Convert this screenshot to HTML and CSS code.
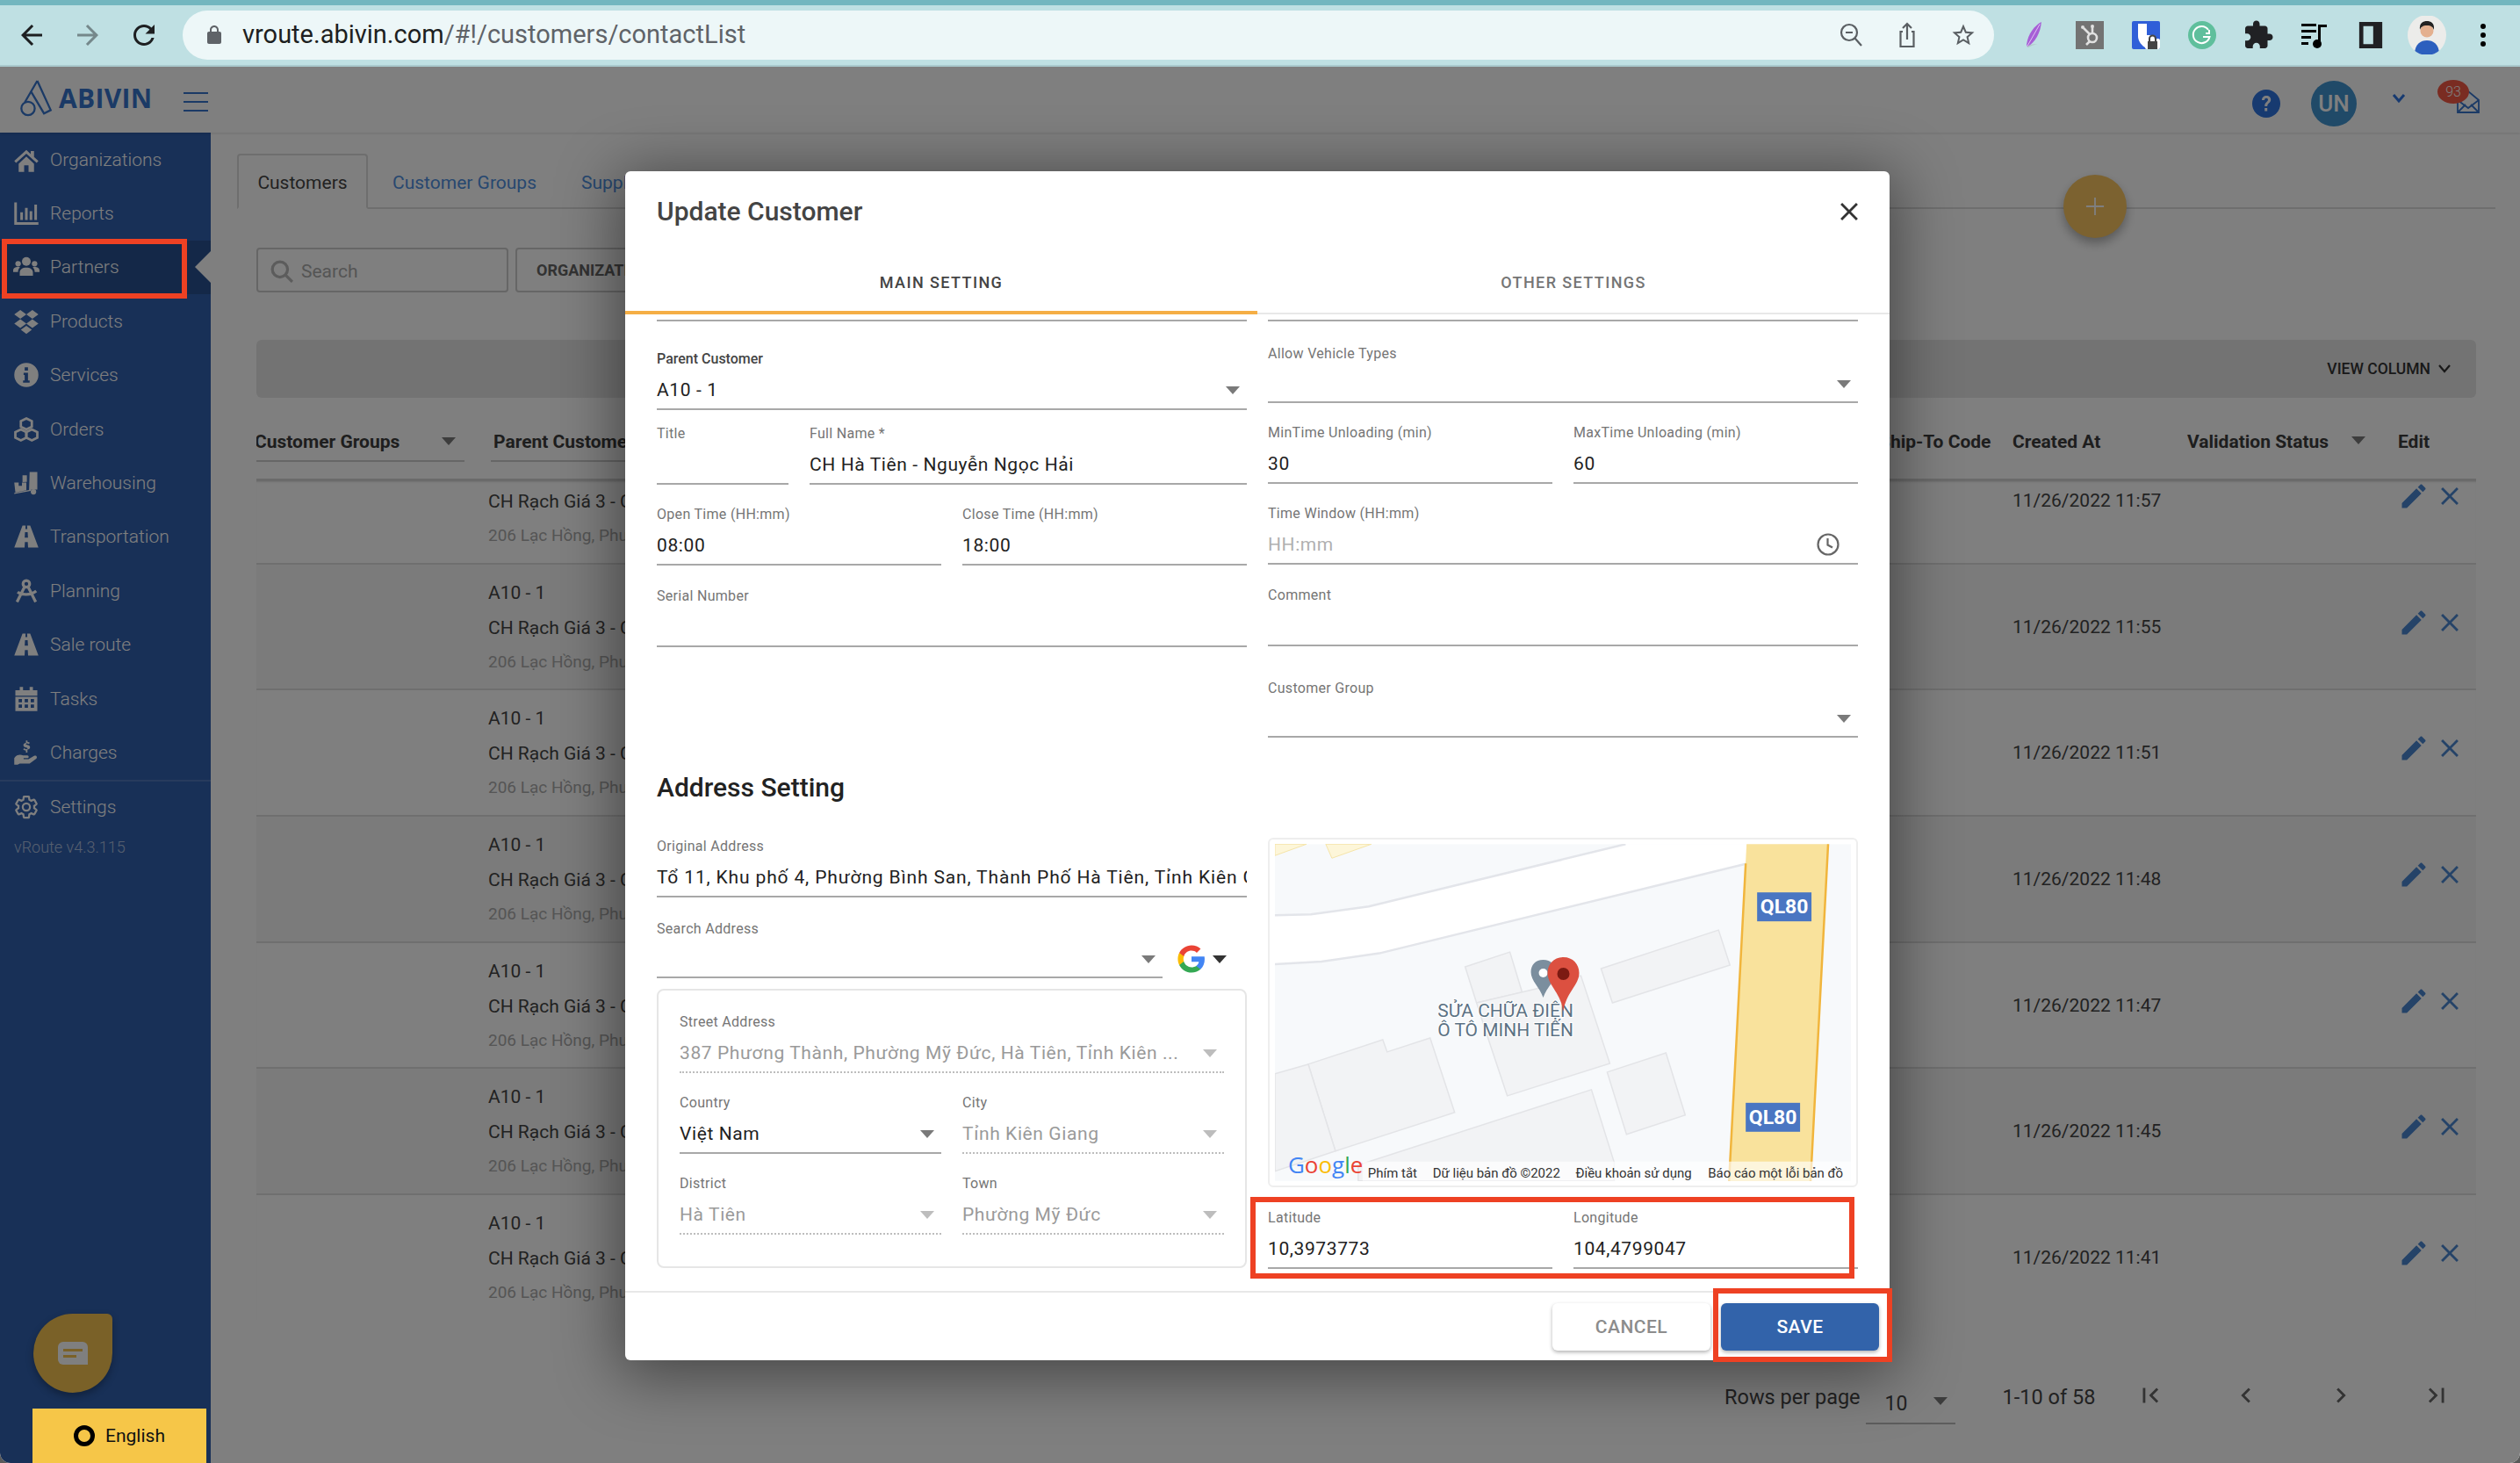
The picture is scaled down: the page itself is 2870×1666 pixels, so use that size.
FILE: index.html
```html
<!DOCTYPE html>
<html lang="en">
<head>
<meta charset="utf-8">
<title>Update Customer</title>
<link rel="stylesheet" href="styles.css">
</head>
<body>
<svg class="defs" aria-hidden="true">
  <symbol id="i-close" viewBox="0 0 24 24"><path d="M19 6.41L17.59 5 12 10.59 6.41 5 5 6.41 10.59 12 5 17.59 6.41 19 12 13.41 17.59 19 19 17.59 13.41 12z"/></symbol>
  <symbol id="i-pencil" viewBox="0 0 24 24"><path d="M3 17.25V21h3.75L17.81 9.94l-3.75-3.75L3 17.25zM20.71 7.04c.39-.39.39-1.02 0-1.41l-2.34-2.34c-.39-.39-1.02-.39-1.41 0l-1.83 1.83 3.75 3.75 1.83-1.83z"/></symbol>
  <symbol id="i-home" viewBox="0 0 24 24"><path d="M12 3 1 13l1.6 1.7L12 6.3l9.4 8.4L23 13l-4-3.6V4h-3v2.7zM5 15.5 12 9l7 6.5V23h-5v-6h-4v6H5z"/></symbol>
  <symbol id="i-reports" viewBox="0 0 24 24"><path d="M1 2h2.4v18H23v2.400H1zM6.500 11h2.400v7H6.500zM10.800 7h2.400v11h-2.400zM15 10h2.400v8H15zM19.300 4h2.400v14h-2.400z"/></symbol>
  <symbol id="i-group" viewBox="0 0 24 24"><circle cx="12" cy="7" r="4"/><circle cx="4.500" cy="9" r="2.500"/><circle cx="19.500" cy="9" r="2.500"/><path d="M6 20v-3c0-3 2.500-4.500 6-4.500s6 1.500 6 4.500v3zM0 15.500C0 13 2 12 4.500 12c.7 0 1.200.1 1.700.3C5 13.300 4.400 14.600 4.400 16.500H0zM24 15.500c0-2.500-2-3.500-4.500-3.500-.7 0-1.200.1-1.700.3 1.200 1 1.800 2.300 1.800 4.200H24z"/></symbol>
  <symbol id="i-products" viewBox="0 0 24 24"><path d="M6.500 1.500 1 5.500l5.500 4L12 5.500zM17.500 1.500 12 5.500l5.500 4 5.500-4zM6.500 10 1 14l5.500 4L12 14zM17.500 10 12 14l5.500 4 5.500-4zM12 16l-5 3.600 5 3.700 5-3.700z"/></symbol>
  <symbol id="i-info" viewBox="0 0 24 24"><path fill-rule="evenodd" d="M12 1a11 11 0 1 0 0 22 11 11 0 0 0 0-22zM10.500 5h3v3h-3zM9.500 10h4v7H15v2H9v-2h1.500v-5h-1z"/></symbol>
  <symbol id="i-orders" viewBox="0 0 24 24"><g fill="none" stroke="currentColor" stroke-width="2.200"><path d="M12 2l5 2.500v5L12 12 7 9.500v-5z"/><path d="M7 12l5 2.500v5L7 22l-5-2.500v-5z"/><path d="M17 12l5 2.500v5L17 22l-5-2.500v-5z"/></g></symbol>
  <symbol id="i-ware" viewBox="0 0 24 24"><path d="M1 11.500h4v3h3v-3h4v7L2 20.500zM8.500 5h4v6l-4 .1zM15 2h7v16h-5.500l-.5 1.200L1 22v-1l13.500-2.700z"/><circle cx="18.500" cy="20" r="2.500"/></symbol>
  <symbol id="i-road" viewBox="0 0 24 24"><path fill-rule="evenodd" d="M8.500 2h2.800l-.2 3.200h1.800L12.700 2h2.800L23 22h-9.400l-.3-5h-2.600l-.3 5H1zM10.800 8l-.3 5h3l-.3-5z"/></symbol>
  <symbol id="i-plan" viewBox="0 0 24 24"><g fill="none" stroke="currentColor" stroke-width="2.600"><circle cx="12" cy="5.500" r="3"/><path d="M10.500 8 3.500 22M13.500 8l7 14M4 13c4 3 12 3 17-1"/></g></symbol>
  <symbol id="i-cal" viewBox="0 0 24 24"><path fill-rule="evenodd" d="M6 1h3v3h6V1h3v3h4v5H2V4h4zM2 10h20v13H2zM5 12v3h3v-3zM10.500 12v3h3v-3zM16 12v3h3v-3zM5 17v3h3v-3zM10.500 17v3h3v-3zM16 17v3h3v-3z"/></symbol>
  <symbol id="i-hand" viewBox="0 0 24 24"><path d="M1 17c2-3 5-3.500 8-2.500h4c1.500 0 1.500 2.500 0 2.500H9.500v1H14l5-3c2-1 3.500 1 2 2.500L15 22H6l-2 1H1zM13 1v1.200c1 .1 1.800.5 2.200 1l-1 1c-.5-.4-1-.6-1.600-.6-.6 0-1 .2-1 .6 0 1 3.800.5 3.800 3 0 1.100-.9 1.900-2.400 2V12h-1.400v-1.800c-1.100-.1-2-.6-2.500-1.200l1-1c.5.500 1.200.9 1.900.9s1.100-.2 1.100-.7c0-1.100-3.800-.5-3.800-3 0-1 .8-1.800 2.300-2V1z"/></symbol>
  <symbol id="i-gear" viewBox="0 0 24 24"><g fill="none" stroke="currentColor" stroke-width="1.800"><path d="M19.140 12.940c.04-.3.06-.61.06-.94 0-.32-.02-.64-.07-.94l2.030-1.580c.18-.14.23-.41.12-.61l-1.920-3.320c-.12-.22-.37-.29-.59-.22l-2.390.96c-.5-.38-1.030-.7-1.620-.94l-.36-2.540c-.04-.24-.24-.41-.48-.41h-3.840c-.24 0-.43.17-.47.41l-.36 2.540c-.59.24-1.130.57-1.620.94l-2.390-.96c-.22-.08-.47 0-.59.22L2.740 8.870c-.12.21-.08.47.12.61l2.030 1.580c-.05.3-.09.63-.09.94s.02.64.07.94l-2.030 1.580c-.18.14-.23.41-.12.61l1.920 3.320c.12.22.37.29.59.22l2.390-.96c.5.38 1.030.7 1.620.94l.36 2.540c.05.24.24.41.48.41h3.840c.24 0 .44-.17.47-.41l.36-2.540c.59-.24 1.130-.56 1.620-.94l2.390.96c.22.08.47 0 .59-.22l1.920-3.320c.12-.22.07-.47-.12-.61l-2.010-1.580z"/><circle cx="12" cy="12" r="3.300"/></g></symbol>
</svg>

<div class="chrome">
  <div class="chrome-btn"><svg class="ic24" viewBox="0 0 24 24"><path d="M20 11H7.830l5.590-5.590L12 4l-8 8 8 8 1.410-1.410L7.830 13H20v-2z"/></svg></div>
  <div class="chrome-btn faded"><svg class="ic24" viewBox="0 0 24 24"><path d="M12 4l-1.410 1.410L16.170 11H4v2h12.170l-5.580 5.590L12 20l8-8z"/></svg></div>
  <div class="chrome-btn"><svg class="ic24" viewBox="0 0 24 24"><path d="M17.650 6.350C16.200 4.900 14.210 4 12 4c-4.420 0-7.990 3.580-7.990 8s3.570 8 7.990 8c3.730 0 6.840-2.550 7.730-6h-2.080c-.82 2.330-3.040 4-5.650 4-3.310 0-6-2.690-6-6s2.690-6 6-6c1.660 0 3.140.69 4.220 1.780L13 11h7V4l-2.350 2.350z"/></svg></div>
  <div class="omnibox">
    <svg class="lock" viewBox="0 0 24 24"><path fill-rule="evenodd" d="M18 8h-1V6c0-2.760-2.240-5-5-5S7 3.240 7 6v2H6c-1.100 0-2 .9-2 2v10c0 1.100.9 2 2 2h12c1.100 0 2-.9 2-2V10c0-1.100-.9-2-2-2zM9 6c0-1.660 1.340-3 3-3s3 1.340 3 3v2H9V6z"/></svg>
    <span class="url"><span class="url-host">vroute.abivin.com</span>/#!/customers/contactList</span>
    <div class="omni-actions">
      <div class="chrome-btn"><svg class="ic30" viewBox="0 0 30 30" fill="none" stroke="#5a5f63" stroke-width="2.200"><circle cx="13" cy="12" r="9"/><path d="M9 12h8M19.500 18.500 27 27"/></svg></div>
      <div class="chrome-btn"><svg class="ic30" viewBox="0 0 30 30" fill="none" stroke="#5a5f63" stroke-width="2.200"><path d="M10 11H7.500v17h15V11H20M15 20V2M10 7l5-5 5 5"/></svg></div>
      <div class="chrome-btn"><svg class="ic30" viewBox="0 0 24 24" fill="#5a5f63"><path d="M22 9.240l-7.190-.62L12 2 9.190 8.630 2 9.240l5.460 4.730L5.820 21 12 17.270 18.180 21l-1.630-7.030L22 9.240zM12 15.400l-3.760 2.270 1-4.280-3.320-2.880 4.380-.38L12 6.100l1.710 4.040 4.380.38-3.320 2.880 1 4.280L12 15.400z"/></svg></div>
    </div>
  </div>
  <div class="extensions">
    <div class="chrome-btn"><svg class="ic36" viewBox="0 0 36 36"><path d="M28 1C19 6 11 16 9 30l1 3C20 27 27 15 28 1z" fill="#a65fd6"/><path d="M26 4 10 32" stroke="#e6cdf5" stroke-width="1"/><path d="M10 33c4-4 9-4 13-3-5 0-9 2-12 4z" fill="#b4c8c8"/></svg></div>
    <div class="chrome-btn"><svg class="ic36" viewBox="0 0 32 32"><rect width="32" height="32" fill="#737373"/><g fill="none" stroke="#e0e0e0" stroke-width="2.600"><circle cx="19" cy="19" r="5"/><path d="M16 15 9 8M19 14V7M16 23l-4 4"/></g><circle cx="8" cy="7" r="2" fill="#e0e0e0"/><circle cx="19" cy="6" r="2" fill="#e0e0e0"/></svg></div>
    <div class="chrome-btn"><svg class="ic36" viewBox="0 0 32 32"><rect width="32" height="32" rx="2" fill="#2f5fd8"/><path d="M7 3h19v14c0 6-4 11-9.500 14C11 28 7 23 7 17z" fill="#fff"/><path d="M17 3h9v13h-9z" fill="#2f5fd8"/><rect x="15" y="20" width="17" height="12" rx="2" fill="#fff"/><rect x="18" y="23" width="11" height="9" fill="#444"/><path d="M20 23v-3a3.500 3.500 0 0 1 7 0v3" fill="none" stroke="#444" stroke-width="2"/></svg></div>
    <div class="chrome-btn"><svg class="ic36" viewBox="0 0 32 32"><circle cx="16" cy="16" r="16" fill="#5fbf9c"/><path d="M23 10a9.500 9.500 0 1 0 1.500 8H17" fill="none" stroke="#fff" stroke-width="2"/><path d="M24 10v4h-4" fill="none" stroke="#fff" stroke-width="2"/></svg></div>
    <div class="chrome-btn"><svg class="ic34" viewBox="0 0 24 24"><path d="M20.500 11H19V7c0-1.100-.9-2-2-2h-4V3.500C13 2.120 11.880 1 10.500 1S8 2.120 8 3.500V5H4c-1.100 0-1.990.9-1.990 2v3.800H3.500c1.490 0 2.700 1.210 2.700 2.700s-1.210 2.700-2.700 2.700H2V20c0 1.100.9 2 2 2h3.800v-1.500c0-1.490 1.210-2.700 2.700-2.700 1.490 0 2.700 1.210 2.700 2.700V22H17c1.100 0 2-.9 2-2v-4h1.500c1.380 0 2.500-1.120 2.500-2.500S21.880 11 20.500 11z"/></svg></div>
    <div class="chrome-btn"><svg class="ic36" viewBox="0 0 32 32"><path d="M1 3h17v3H1zM1 10h17v3H1zM1 17h11v3H1zM1 24h8v3H1z"/><path d="M20 4h10v3h-7v20h-3z"/><circle cx="19" cy="26" r="5"/></svg></div>
    <div class="chrome-btn"><svg class="ic30" viewBox="0 0 30 32"><path fill-rule="evenodd" d="M1 0h28v32H1zM6 5v22h12V5z" fill="#202124"/></svg></div>
    <div class="chrome-btn"><svg class="avatar" viewBox="0 0 44 44"><rect width="44" height="44" fill="#ececea"/><circle cx="22" cy="17" r="7.500" fill="#e4b08f"/><path d="M14 16c-1-8 4-10 8-10s9 2 8 10c-1-3-3-5-8-5s-7 2-8 5z" fill="#222"/><path d="M8 44c0-12 7-16 14-16s14 4 14 16z" fill="#2c5fbe"/></svg></div>
    <div class="chrome-btn"><svg class="ic30" viewBox="0 0 30 30"><circle cx="15" cy="5" r="3"/><circle cx="15" cy="15" r="3"/><circle cx="15" cy="25" r="3"/></svg></div>
  </div>
</div>

<div class="app">
  <header class="topbar">
    <div class="logo">
      <svg class="logo-mark" viewBox="0 0 40 44" fill="none" stroke="#3674cc" stroke-width="2.400"><path d="M21 1 6 27M21 1l16 35-8 4-16-27"/><circle cx="10" cy="34" r="8"/></svg>
      <span class="logo-text">ABIVIN</span>
    </div>
    <div class="burger"><span></span><span></span><span></span></div>
    <div class="top-right">
      <svg class="help" viewBox="0 0 32 32"><circle cx="16" cy="16" r="16" fill="#2f74e0"/><path d="M11 12c0-3 2.200-5 5.200-5s5 2 5 4.500c0 4-4 3.800-4 7.500h-3c0-5 3.800-4.800 3.800-7.500 0-1-.8-1.800-1.900-1.800s-2 .9-2.100 2.300zM14.200 21h3v3.500h-3z" fill="#fff"/></svg>
      <div class="user-chip">UN</div>
      <svg class="top-chev" viewBox="0 0 16 12" fill="none" stroke="#2f74e0" stroke-width="3"><path d="M2 2l6 7 6-7"/></svg>
      <div class="mail">
        <svg class="mail-ic" viewBox="0 0 26 26" fill="none" stroke="#3674cc" stroke-width="1.800"><path d="M1 11 13 1l12 10v14H1zM1 25l9-9M25 25l-9-9M1 11l12 9 12-9"/></svg>
        <span class="mail-badge">93</span>
      </div>
    </div>
  </header>

  <div class="workspace">
    <nav class="sidebar">
      <a class="nav-item"><svg class="nav-ic"><use href="#i-home"/></svg>Organizations</a>
      <a class="nav-item"><svg class="nav-ic"><use href="#i-reports"/></svg>Reports</a>
      <a class="nav-item active"><svg class="nav-ic"><use href="#i-group"/></svg>Partners</a>
      <a class="nav-item"><svg class="nav-ic"><use href="#i-products"/></svg>Products</a>
      <a class="nav-item"><svg class="nav-ic"><use href="#i-info"/></svg>Services</a>
      <a class="nav-item"><svg class="nav-ic"><use href="#i-orders"/></svg>Orders</a>
      <a class="nav-item"><svg class="nav-ic"><use href="#i-ware"/></svg>Warehousing</a>
      <a class="nav-item"><svg class="nav-ic"><use href="#i-road"/></svg>Transportation</a>
      <a class="nav-item"><svg class="nav-ic"><use href="#i-plan"/></svg>Planning</a>
      <a class="nav-item"><svg class="nav-ic"><use href="#i-road"/></svg>Sale route</a>
      <a class="nav-item"><svg class="nav-ic"><use href="#i-cal"/></svg>Tasks</a>
      <a class="nav-item"><svg class="nav-ic"><use href="#i-hand"/></svg>Charges</a>
      <a class="nav-item nav-settings"><svg class="nav-ic"><use href="#i-gear"/></svg>Settings</a>
      <div class="version">vRoute v4.3.115</div>
      <div class="chat-bubble"><svg class="chat-ic" viewBox="0 0 34 26"><path d="M6 0h22a6 6 0 0 1 6 6v20H6a6 6 0 0 1-6-6V6a6 6 0 0 1 6-6z" fill="#fff"/><path d="M6 8h22v3H6zM6 15h15v3H6z" fill="#f4c250"/></svg></div>
    </nav>

    <main class="content">
      <div class="tabs">
        <div class="tab current">Customers</div>
        <div class="tab">Customer Groups</div>
        <div class="tab">Suppliers</div>
      </div>
      <div class="panel">
        <div class="filters">
          <div class="search-box">
            <svg class="search-ic" viewBox="0 0 24 24" fill="none" stroke="#b8b8b8" stroke-width="3"><circle cx="10" cy="10" r="8"/><path d="M16 16l7 7"/></svg>
            <span>Search</span>
          </div>
          <div class="filter-box">ORGANIZATION</div>
        </div>
        <div class="toolbar">
          <span>VIEW COLUMN</span>
          <svg class="tool-chev" viewBox="0 0 16 12" fill="none" stroke="#333" stroke-width="2.200"><path d="M2 2l6 7 6-7"/></svg>
        </div>
        <div class="thead">
          <div class="th th-line th-clip"><span class="th-groups">Customer Groups</span><i class="caret"></i></div>
          <div class="th th-line">Parent Customer</div>
          <div class="th th-ship">Ship-To Code</div>
          <div class="th">Created At</div>
          <div class="th th-status"><span>Validation Status</span><i class="caret"></i></div>
          <div class="th">Edit</div>
        </div>
        <div class="tbody">
          <div class="tscroll">
            <div class="row"><div class="cell-parent"><div>A10 - 1</div><div>CH Rạch Giá 3 - C</div><div class="addr">206 Lạc Hồng, Phường</div></div><div class="cell-date">11/26/2022 11:57</div><div class="cell-edit"><svg class="ic-pencil"><use href="#i-pencil"/></svg><svg class="ic-x"><use href="#i-close"/></svg></div></div>
            <div class="row alt"><div class="cell-parent"><div>A10 - 1</div><div>CH Rạch Giá 3 - C</div><div class="addr">206 Lạc Hồng, Phường</div></div><div class="cell-date">11/26/2022 11:55</div><div class="cell-edit"><svg class="ic-pencil"><use href="#i-pencil"/></svg><svg class="ic-x"><use href="#i-close"/></svg></div></div>
            <div class="row"><div class="cell-parent"><div>A10 - 1</div><div>CH Rạch Giá 3 - C</div><div class="addr">206 Lạc Hồng, Phường</div></div><div class="cell-date">11/26/2022 11:51</div><div class="cell-edit"><svg class="ic-pencil"><use href="#i-pencil"/></svg><svg class="ic-x"><use href="#i-close"/></svg></div></div>
            <div class="row alt"><div class="cell-parent"><div>A10 - 1</div><div>CH Rạch Giá 3 - C</div><div class="addr">206 Lạc Hồng, Phường</div></div><div class="cell-date">11/26/2022 11:48</div><div class="cell-edit"><svg class="ic-pencil"><use href="#i-pencil"/></svg><svg class="ic-x"><use href="#i-close"/></svg></div></div>
            <div class="row"><div class="cell-parent"><div>A10 - 1</div><div>CH Rạch Giá 3 - C</div><div class="addr">206 Lạc Hồng, Phường</div></div><div class="cell-date">11/26/2022 11:47</div><div class="cell-edit"><svg class="ic-pencil"><use href="#i-pencil"/></svg><svg class="ic-x"><use href="#i-close"/></svg></div></div>
            <div class="row alt"><div class="cell-parent"><div>A10 - 1</div><div>CH Rạch Giá 3 - C</div><div class="addr">206 Lạc Hồng, Phường</div></div><div class="cell-date">11/26/2022 11:45</div><div class="cell-edit"><svg class="ic-pencil"><use href="#i-pencil"/></svg><svg class="ic-x"><use href="#i-close"/></svg></div></div>
            <div class="row last"><div class="cell-parent"><div>A10 - 1</div><div>CH Rạch Giá 3 - C</div><div class="addr">206 Lạc Hồng, Phường</div></div><div class="cell-date">11/26/2022 11:41</div><div class="cell-edit"><svg class="ic-pencil"><use href="#i-pencil"/></svg><svg class="ic-x"><use href="#i-close"/></svg></div></div>
          </div>
        </div>
        <div class="pager">
          <span class="pager-label">Rows per page</span>
          <div class="pager-select"><span>10</span><i class="caret"></i></div>
          <span class="pager-range">1-10 of 58</span>
          <svg class="pager-ic" viewBox="0 0 24 24"><path d="M18.410 16.590L13.820 12l4.590-4.590L17 6l-6 6 6 6zM6 6h2v12H6z"/></svg>
          <svg class="pager-ic" viewBox="0 0 24 24"><path d="M15.410 7.410L14 6l-6 6 6 6 1.410-1.410L10.830 12z"/></svg>
          <svg class="pager-ic" viewBox="0 0 24 24"><path d="M10 6L8.590 7.410 13.170 12l-4.580 4.590L10 18l6-6z"/></svg>
          <svg class="pager-ic" viewBox="0 0 24 24"><path d="M5.590 7.410L10.180 12l-4.590 4.590L7 18l6-6-6-6zM16 6h2v12h-2z"/></svg>
        </div>
      </div>
      <div class="fab"><svg class="fab-ic" viewBox="0 0 24 24" fill="none" stroke="#fff" stroke-width="2"><path d="M12 1v22M1 12h22"/></svg></div>
    </main>
  </div>

  <div class="backdrop"></div>

  <section class="modal">
    <div class="modal-head">
      <h2 class="modal-title">Update Customer</h2>
      <svg class="modal-close"><use href="#i-close"/></svg>
    </div>
    <div class="modal-tabs">
      <div class="modal-tab on">MAIN SETTING</div>
      <div class="modal-tab">OTHER SETTINGS</div>
    </div>
    <div class="modal-body">
      <div class="col">
        <div class="stub"></div>
        <div class="field f-parent">
          <label class="lbl dark">Parent Customer</label>
          <div class="val">A10 - 1<i class="caret"></i></div>
        </div>
        <div class="two g-name">
          <div class="field f-title"><label class="lbl">Title</label><div class="val"></div></div>
          <div class="field f-grow"><label class="lbl">Full Name *</label><div class="val">CH Hà Tiên - Nguyễn Ngọc Hải</div></div>
        </div>
        <div class="two g-time">
          <div class="field f-grow"><label class="lbl">Open Time (HH:mm)</label><div class="val">08:00</div></div>
          <div class="field f-grow"><label class="lbl">Close Time (HH:mm)</label><div class="val">18:00</div></div>
        </div>
        <div class="field g-serial"><label class="lbl">Serial Number</label><div class="val"></div></div>
        <h3 class="section-title">Address Setting</h3>
        <div class="field"><label class="lbl">Original Address</label><div class="val clip"><span>Tổ 11, Khu phố 4, Phường Bình San, Thành Phố Hà Tiên, Tỉnh Kiên Giang</span></div></div>
        <div class="search-row">
          <div class="field f-search"><label class="lbl">Search Address</label><div class="val short"><i class="caret"></i></div></div>
          <svg class="g-logo" viewBox="0 0 24 24"><path fill="#4285f4" d="M22.560 12.250c0-.78-.07-1.530-.2-2.250H12v4.260h5.920c-.26 1.370-1.040 2.530-2.210 3.310v2.770h3.570c2.080-1.920 3.280-4.740 3.280-8.090z"/><path fill="#34a853" d="M12 23c2.970 0 5.460-.98 7.280-2.660l-3.570-2.770c-.98.66-2.230 1.060-3.710 1.060-2.860 0-5.290-1.930-6.160-4.530H2.180v2.840C3.990 20.530 7.700 23 12 23z"/><path fill="#fbbc05" d="M5.840 14.090c-.22-.66-.35-1.360-.35-2.090s.13-1.430.35-2.090V7.070H2.180C1.430 8.550 1 10.220 1 12s.43 3.450 1.180 4.930l2.850-2.220.81-.62z"/><path fill="#ea4335" d="M12 5.380c1.620 0 3.060.56 4.210 1.640l3.150-3.150C17.450 2.090 14.970 1 12 1 7.700 1 3.990 3.470 2.180 7.070l3.660 2.840c.87-2.600 3.300-4.530 6.160-4.530z"/></svg>
          <i class="caret black"></i>
        </div>
        <div class="addr-box">
          <div class="field off"><label class="lbl">Street Address</label><div class="val">387 Phương Thành, Phường Mỹ Đức, Hà Tiên, Tỉnh Kiên ...<i class="caret pale"></i></div></div>
          <div class="two g-addr">
            <div class="field f-grow"><label class="lbl">Country</label><div class="val">Việt Nam<i class="caret"></i></div></div>
            <div class="field f-grow off"><label class="lbl">City</label><div class="val">Tỉnh Kiên Giang<i class="caret pale"></i></div></div>
          </div>
          <div class="two g-addr">
            <div class="field f-grow off"><label class="lbl">District</label><div class="val">Hà Tiên<i class="caret pale"></i></div></div>
            <div class="field f-grow off"><label class="lbl">Town</label><div class="val">Phường Mỹ Đức<i class="caret pale"></i></div></div>
          </div>
        </div>
      </div>

      <div class="col">
        <div class="stub"></div>
        <div class="field g-allow"><label class="lbl">Allow Vehicle Types</label><div class="val short"><i class="caret"></i></div></div>
        <div class="two g-min">
          <div class="field f-grow"><label class="lbl">MinTime Unloading (min)</label><div class="val">30</div></div>
          <div class="field f-grow"><label class="lbl">MaxTime Unloading (min)</label><div class="val">60</div></div>
        </div>
        <div class="field g-time"><label class="lbl">Time Window (HH:mm)</label><div class="val hint">HH:mm<svg class="clock" viewBox="0 0 26 26" fill="none" stroke="#666" stroke-width="2.200"><circle cx="13" cy="13" r="11.500"/><path d="M12.500 6v7.500l5.500 3"/></svg></div></div>
        <div class="field g-serial"><label class="lbl">Comment</label><div class="val"></div></div>
        <div class="field g-group"><label class="lbl">Customer Group</label><div class="val short"><i class="caret"></i></div></div>
        <div class="map-box">
          <svg class="map" viewBox="0 0 657 384">
            <rect width="657" height="384" fill="#f7f9fb"/>
            <path d="M0 13 36 0H0zM58 0l7 16L110 0z" fill="#fdf6d9" stroke="#f5e4a8"/>
            <path d="M0 81 41 80 107 71 400 0H575V0L537 22.500 119 124.500 53 134 0 137z" fill="#fff"/>
            <path d="M0 81 41 80 107 71 400 0M0 137 53 134 119 124.500 537 22.500" fill="none" stroke="#e3e5ea" stroke-width="2.500"/>
            <g fill="#f2f3f5" stroke="#e3e4e7" stroke-width="1.500">
              <path d="M217 140 268 123 282 169 230 181z"/>
              <path d="M230 181 298 165 349 150 382 250 265 287 244 224z"/>
              <path d="M372 142 506 98 519 138 385 181z"/>
              <path d="M379 260 446 238 468 309 401 331z"/>
              <path d="M38 251 123 223 128 237 177 221 205 306 69 350z"/>
              <path d="M0 262 38 251 69 350 0 373z"/>
              <path d="M95 366 361 280 387 363V384H95z"/>
            </g>
            <path d="M538 0H631L611 384H518z" fill="#f9e29c"/>
            <path d="M537 22 518 384M631 0 611 384" fill="none" stroke="#f1b53c" stroke-width="2.500"/>
            <rect x="550" y="55" width="62" height="33" fill="#4a76c2"/>
            <rect x="537" y="295" width="62" height="33" fill="#4a76c2"/>
            <text class="map-road" x="581" y="79">QL80</text>
            <text class="map-road" x="568" y="319">QL80</text>
            <text class="map-poi" x="263" y="197">SỬA CHỮA ĐIỆN</text>
            <text class="map-poi" x="263" y="219">Ô TÔ MINH TIẾN</text>
            <path d="M306 132c-9 0-14 6-14 14 0 10 10 17 14 29 4-12 14-19 14-29 0-8-5-14-14-14z" fill="#7b8e9e"/>
            <circle cx="306" cy="147" r="5" fill="#fff"/>
            <path d="M329 129c-11 0-18 8-18 18 0 14 15 22 18 44 3-22 18-30 18-44 0-10-7-18-18-18z" fill="#dc5040"/>
            <circle cx="329" cy="148" r="7" fill="#7c1a12"/>
            <rect x="100" y="362" width="557" height="22" fill="#fff" fill-opacity=".65"/>
            <text class="map-logo" x="15" y="375"><tspan fill="#4285f4">G</tspan><tspan fill="#ea4335">o</tspan><tspan fill="#fbbc05">o</tspan><tspan fill="#4285f4">g</tspan><tspan fill="#34a853">l</tspan><tspan fill="#ea4335">e</tspan></text>
            <text class="map-attr" x="106" y="380">Phím tắt</text>
            <text class="map-attr" x="180" y="380">Dữ liệu bản đồ ©2022</text>
            <text class="map-attr" x="343" y="380">Điều khoản sử dụng</text>
            <text class="map-attr" x="494" y="380">Báo cáo một lỗi bản đồ</text>
          </svg>
        </div>
        <div class="two g-latlng">
          <div class="field f-grow"><label class="lbl">Latitude</label><div class="val">10,3973773</div></div>
          <div class="field f-grow"><label class="lbl">Longitude</label><div class="val">104,4799047</div></div>
        </div>
      </div>
    </div>
    <div class="modal-foot">
      <button class="btn btn-cancel">CANCEL</button>
      <button class="btn btn-save">SAVE</button>
    </div>
  </section>

  <div class="lang"><i class="lang-ring"></i>English</div>
</div>

<div class="mark mark-partners"></div>
<div class="mark mark-latlng"></div>
<div class="mark mark-save"></div>
</body>
</html>
```

FILE: styles.css
```css
* { box-sizing: border-box; }
html, body { margin: 0; height: 100%; }
body {
  position: relative;
  height: 1666px;
  overflow: hidden;
  display: flex;
  flex-direction: column;
  font-family: Roboto, "Noto Sans", sans-serif;
  color: #444;
  background: #5a5a5a;
}
.defs { position: absolute; width: 0; height: 0; }
svg { display: block; flex: none; }

/* browser chrome */
.chrome {
  flex: none;
  height: 76px;
  display: flex;
  align-items: center;
  padding: 0 0 0 4px;
  background: #bfe0e3;
  border-top: 6px solid #73b6bf;
  border-bottom: 2px solid #a9c9cd;
}
.chrome-btn { width: 64px; height: 56px; display: flex; align-items: center; justify-content: center; flex: none; }
.chrome-btn.faded { opacity: .45; }
.ic24 { width: 36px; height: 36px; fill: #1d1f21; }
.ic30 { width: 30px; height: 30px; }
.ic34 { width: 36px; height: 36px; fill: #202124; }
.ic36 { width: 32px; height: 32px; }
.avatar { width: 44px; height: 46px; border-radius: 50%; }
.omnibox {
  margin-left: 12px;
  width: 2063px;
  height: 56px;
  border-radius: 28px;
  background: #edf7f8;
  display: flex;
  align-items: center;
  padding-left: 24px;
}
.lock { width: 24px; height: 24px; fill: #5f6368; }
.url { margin-left: 20px; margin-top: -3px; font-size: 29px; color: #5f6368; white-space: nowrap; }
.url-host { color: #1d1f21; }
.omni-actions { margin-left: auto; display: flex; padding-right: 3px; }
.extensions { margin-left: 13px; display: flex; }

/* app */
.app { flex: 1; min-height: 0; display: flex; flex-direction: column; position: relative; background: #fff; border-radius: 0 0 12px 12px; overflow: hidden; }
.topbar { flex: none; height: 75px; display: flex; align-items: center; background: #fff; box-shadow: 0 1px 3px rgba(0,0,0,.12); position: relative; z-index: 1; }
.logo { display: flex; align-items: center; margin-left: 22px; margin-top: -4px; }
.logo-mark { width: 39px; height: 42px; }
.logo-text { margin-left: 6px; font-size: 30px; font-weight: 700; letter-spacing: .3px; color: #3674cc; font-family: "Open Sans", Roboto, sans-serif; line-height: 1; }
.burger { margin-left: 36px; margin-top: 5px; width: 28px; display: flex; flex-direction: column; gap: 8px; }
.burger span { height: 2px; background: #3674cc; }
.top-right { margin-left: auto; padding-right: 44px; padding-top: 8px; display: flex; align-items: center; }
.help { width: 32px; height: 32px; }
.user-chip { margin-left: 35px; width: 52px; height: 52px; border-radius: 50%; background: #4094d0; color: #fff; font-size: 26px; font-weight: 500; display: flex; align-items: center; justify-content: center; }
.top-chev { margin-left: 40px; margin-bottom: 12px; width: 16px; height: 12px; }
.mail { margin-left: 36px; width: 50px; height: 44px; position: relative; margin-top: -10px; }
.mail-ic { position: absolute; left: 22px; top: 12px; width: 26px; height: 26px; }
.mail-badge { position: absolute; left: 0; top: 0; width: 36px; height: 27px; border-radius: 50%; background: #f45844; color: #fff; font-size: 16px; font-weight: 300; display: flex; align-items: center; justify-content: center; }

.workspace { flex: 1; min-height: 0; display: flex; }
.sidebar { flex: none; width: 240px; background: #3060ae; position: relative; border-bottom-left-radius: 12px; }
.nav-item { height: 61.400px; display: flex; align-items: center; gap: 11px; padding-left: 14px; color: #fff; font-size: 21px; font-weight: 300; position: relative; }
.nav-ic { width: 32px; height: 30px; fill: currentColor; color: #fff; }
.nav-item.active { background: #285090; }
.nav-item.active::after { content: ""; position: absolute; right: 0; top: 12px; border: 18px solid transparent; border-right-color: #fff; border-left-width: 0; }
.nav-settings { border-top: 2px solid rgba(255,255,255,.15); }
.version { height: 32px; line-height: 32px; padding-left: 16px; font-size: 18px; font-weight: 300; color: rgba(255,255,255,.62); }
.chat-bubble { position: absolute; left: 38px; top: 1345px; width: 90px; height: 90px; background: #f4c250; border-radius: 50% 6px 50% 50%; box-shadow: 0 4px 8px rgba(0,0,0,.3); display: flex; align-items: center; justify-content: center; }
.chat-ic { width: 34px; height: 26px; }

.content { flex: 1; min-width: 0; padding: 24px 28px 0 30px; position: relative; }
.tabs { display: flex; height: 63px; border-bottom: 2px solid #ddd; }
.tab { padding: 2px 22px 0; margin-right: 7px; height: 63px; display: flex; align-items: center; font-size: 21px; color: #4f90e0; font-weight: 400; white-space: nowrap; }
.tab.current { width: 149px; margin-right: 6px; justify-content: center; padding: 2px 0 0; color: #444; border: 2px solid #ddd; border-bottom: 2px solid #fff; border-radius: 4px 4px 0 0; }
.panel { padding: 44px 22px 0; }
.filters { display: flex; gap: 8px; height: 51px; }
.search-box { width: 287px; border: 2px solid #ccc; border-radius: 4px; display: flex; align-items: center; padding: 2px 0 0 14px; gap: 9px; color: #aaa; font-size: 21px; }
.search-ic { width: 26px; height: 26px; }
.filter-box { width: 250px; border: 2px solid #ccc; border-radius: 4px; padding-left: 22px; display: flex; align-items: center; font-size: 18px; font-weight: 700; color: #666; }
.toolbar { margin-top: 54px; height: 66px; border-radius: 6px; background: #e6e6e6; display: flex; align-items: center; justify-content: flex-end; padding-right: 28px; font-size: 17.500px; font-weight: 500; color: #333; }
.tool-chev { margin-left: 8px; width: 16px; height: 12px; }
.caret { display: inline-block; flex: none; width: 0; height: 0; border: 8px solid transparent; border-top: 9px solid #7a7a7a; border-bottom: 0; }
.caret.pale { border-top-color: #bdbdbd; }
.caret.black { border-top-color: #333; }

.thead { display: grid; grid-template-columns: 264px 1587px 149px 199px 240px 89px; height: 92px; color: #3c3c3c; font-size: 21px; font-weight: 700; }
.th { padding-top: 37px; white-space: nowrap; line-height: 26px; }
.th-line { position: relative; }
.th-line::after { content: ""; position: absolute; left: 0; right: 27px; top: 71px; border-bottom: 2px solid #ccc; }
.th-line + .th-line::after { left: 3px; }
.th-line + .th-line { padding-left: 6px; }
.th-clip { overflow: hidden; display: flex; align-items: flex-start; }
.th-groups { margin-left: -2px; }
.th-clip .caret { margin-left: 48px; margin-top: 8px; }
.th-ship { margin-left: -3px; width: 152px; }
.th-status { display: flex; align-items: flex-start; }
.th-status .caret { margin-left: 26px; margin-top: 7px; }
.tbody { height: 958px; overflow: hidden; box-shadow: inset 0 3px 3px -2px rgba(0,0,0,.25); border-top: 2px solid #d4d4d4; }
.tscroll { margin-top: -48px; }
.row { height: 143.700px; display: grid; grid-template-columns: 264px 1736px 199px 240px 89px; border-bottom: 2px solid #dedede; font-size: 21px; color: #444; }
.row.alt { background: #f6f6f6; }
.row.last { border-bottom: 0; }
.cell-parent { grid-column: 2; padding-top: 16px; }
.cell-parent div { height: 32px; line-height: 32px; margin-bottom: 8px; white-space: nowrap; }
.cell-parent .addr { color: #aaa; font-size: 19px; height: 30px; line-height: 30px; }
.cell-date { padding-top: 56px; line-height: 30px; white-space: nowrap; }
.cell-edit { grid-column: 5; display: flex; align-items: flex-start; padding-top: 48px; color: #4f86c6; }
.ic-pencil { width: 36px; height: 36px; fill: #4a86d0; }
.ic-x { width: 34px; height: 34px; fill: #4a86d0; margin-left: 6px; margin-top: 1px; }
.pager { display: flex; align-items: center; height: 60px; margin-top: 58px; font-size: 23.500px; color: #444; font-weight: 400; }
.pager-label { margin-left: 1672px; white-space: nowrap; }
.pager-select { margin-left: 6px; width: 102px; height: 46px; margin-top: 16px; border-bottom: 2px solid #bbb; display: flex; align-items: center; padding-left: 22px; gap: 30px; font-size: 23px; flex: none; }
.pager-select .caret { margin-top: -6px; }
.pager-range { margin-left: 54px; white-space: nowrap; }
.pager-ic { width: 34px; height: 34px; fill: #666; margin-right: 74.500px; margin-top: -4px; }
.pager-range + .pager-ic { margin-left: 46px; }
.fab { position: absolute; left: 2110px; top: 48px; width: 72px; height: 72px; border-radius: 50%; background: #f8c460; box-shadow: 0 6px 12px rgba(0,0,0,.3); display: flex; align-items: center; justify-content: center; }
.fab-ic { width: 22px; height: 22px; }

.backdrop { position: absolute; inset: 0; background: rgba(0,0,0,.5); border-radius: 0 0 12px 0; z-index: 2; }

/* modal */
.modal { position: absolute; left: 712px; top: 119px; width: 1440px; height: 1354px; z-index: 3; background: #fff; border-radius: 6px; box-shadow: 0 10px 70px 8px rgba(0,0,0,.45); display: flex; flex-direction: column; overflow: hidden; }
.modal-head { flex: none; height: 94px; display: flex; align-items: center; padding: 0 36px; justify-content: space-between; }
.modal-title { margin: 0; font-size: 30px; font-weight: 500; color: #444; margin-top: -4px; }
.modal-close { width: 34px; height: 34px; fill: #333; margin-right: -7px; margin-top: -3px; }
.modal-tabs { flex: none; height: 69px; display: flex; border-bottom: 2px solid #e8e8e8; }
.modal-tab { flex: 1; display: flex; align-items: center; justify-content: center; padding-bottom: 4px; font-size: 18px; font-weight: 500; letter-spacing: 1.400px; color: #757575; height: 69px; }
.modal-tab.on { padding-bottom: 0; color: #444; border-bottom: 4px solid #f5ae45; }
.modal-body { flex: 1; min-height: 0; overflow: hidden; display: grid; grid-template-columns: 672px 672px; gap: 24px; padding: 0 36px; }
.col { min-width: 0; }
.stub { height: 8px; border-bottom: 2px solid #a8a8a8; }
.two { display: flex; gap: 24px; }
.field { display: flex; flex-direction: column; min-width: 0; }
.f-grow { flex: 1; min-width: 0; }
.f-title { width: 150px; flex: none; }
.f-search { width: 576px; flex: none; }
.lbl { height: 20px; line-height: 20px; font-size: 16px; letter-spacing: .3px; color: #757575; white-space: nowrap; }
.lbl.dark { color: #444; font-weight: 500; letter-spacing: 0; }
.val { margin-top: 10px; height: 38px; padding-bottom: 6px; border-bottom: 2px solid #a8a8a8; display: flex; align-items: center; justify-content: space-between; font-size: 21px; letter-spacing: .6px; color: #212121; white-space: nowrap; }
.val.short { height: 36px; justify-content: flex-end; }
.val .caret { margin-right: 8px; }
.val.short .caret { margin-right: 8px; }
.val.clip { overflow: hidden; letter-spacing: .85px; }
.val.clip span { flex: none; margin-right: auto; }
.val.hint { color: #b0b0b0; }
.clock { width: 26px; height: 26px; margin-right: 21px; }
.off .val { color: #9a9a9a; border-bottom: 2px dotted #bdbdbd; }
.f-parent { margin-top: 33px; }
.g-name { margin-top: 17px; }
.g-time { margin-top: 24px; }
.g-serial { margin-top: 25px; }
.section-title { margin: 140px 0 37px; height: 40px; line-height: 40px; font-size: 30px; font-weight: 500; color: #222; }
.search-row { margin-top: 26px; display: flex; align-items: flex-end; }
.g-logo { width: 34px; height: 34px; margin: 0 0 5px 16px; }
.search-row .caret.black { margin: 0 0 17px 7px; }
.addr-box { margin-top: 12px; height: 318px; border: 2px solid #e6e6e6; border-radius: 8px; padding: 26px 24px 0; }
.g-addr { margin-top: 24px; }
.g-allow { margin-top: 27px; }
.g-min { margin-top: 24px; }
.g-group { margin-top: 38px; }
.map-box { margin-top: 114px; height: 398px; border: 2px solid #eee; border-radius: 6px; padding: 5px 6px; }
.map { width: 100%; height: 384px; }
.map-road { font-size: 23px; font-weight: 700; fill: #fff; text-anchor: middle; font-family: Roboto, sans-serif; }
.map-poi { font-size: 21px; fill: #5c7284; text-anchor: middle; font-family: Roboto, sans-serif; stroke: #fff; stroke-width: 2px; paint-order: stroke; }
.map-logo { font-size: 26px; font-family: "Open Sans", sans-serif; font-weight: 400; }
.map-attr { font-size: 15px; fill: #333; font-family: Roboto, sans-serif; }
.g-latlng { margin-top: 25px; }
.modal-foot { flex: none; height: 79px; border-top: 2px solid #e8e8e8; padding: 12px 12px 0 0; display: flex; justify-content: flex-end; gap: 12px; }
.btn { width: 180px; height: 54px; border: 0; border-radius: 6px; font-family: Roboto, sans-serif; font-size: 21px; font-weight: 500; letter-spacing: .5px; box-shadow: 0 2px 4px rgba(0,0,0,.3); }
.btn-cancel { background: #fff; color: #8c8c8c; }
.btn-save { background: #3263aa; color: #fff; }

.lang { position: absolute; left: 37px; bottom: 0; width: 198px; height: 62px; z-index: 3; background: #f6c648; display: flex; align-items: center; padding-left: 47px; gap: 12px; font-size: 21px; color: #111; }
.lang-ring { width: 24px; height: 24px; border: 5px solid #000; border-radius: 50%; }

.mark { position: absolute; border: 6px solid #ee4123; z-index: 5; }
.mark-partners { left: 2px; top: 272px; width: 211px; height: 68px; }
.mark-latlng { left: 1424px; top: 1363px; width: 688px; height: 93px; }
.mark-save { left: 1951px; top: 1467px; width: 204px; height: 84px; }
```
